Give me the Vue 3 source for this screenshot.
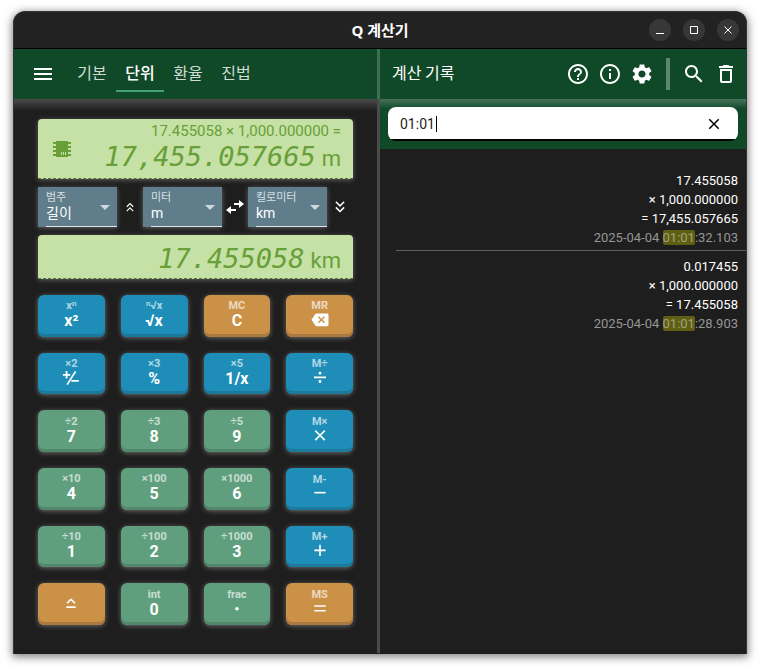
<script setup>
import { ref } from 'vue'

const tabs = ['기본', '단위', '환율', '진법']
const activeTab = ref('단위')
const search = ref('01:01')

const keys = [
  { sub: 'x', sup: 'n', main: 'x²', tone: 'blue' },
  { pre: 'n', sub: '√x', main: '√x', tone: 'blue' },
  { sub: 'MC', main: 'C', tone: 'orange' },
  { sub: 'MR', icon: 'backspace', name: '지우기', tone: 'orange' },
  { sub: '×2', icon: 'sign', name: '부호', tone: 'blue' },
  { sub: '×3', main: '%', tone: 'blue' },
  { sub: '×5', main: '1/x', tone: 'blue' },
  { sub: 'M÷', icon: 'divide', name: '나누기', tone: 'blue' },
  { sub: '÷2', main: '7', tone: 'green' },
  { sub: '÷3', main: '8', tone: 'green' },
  { sub: '÷5', main: '9', tone: 'green' },
  { sub: 'M×', icon: 'times', name: '곱하기', tone: 'blue' },
  { sub: '×10', main: '4', tone: 'green' },
  { sub: '×100', main: '5', tone: 'green' },
  { sub: '×1000', main: '6', tone: 'green' },
  { sub: 'M-', icon: 'minus', name: '빼기', tone: 'blue' },
  { sub: '÷10', main: '1', tone: 'green' },
  { sub: '÷100', main: '2', tone: 'green' },
  { sub: '÷1000', main: '3', tone: 'green' },
  { sub: 'M+', icon: 'plus', name: '더하기', tone: 'blue' },
  { icon: 'shift', name: '시프트', tone: 'orange' },
  { sub: 'int', main: '0', tone: 'green' },
  { sub: 'frac', icon: 'dot', name: '소수점', tone: 'green' },
  { sub: 'MS', icon: 'equal', name: '계산', tone: 'orange' }
]

const keyIcons = {
  backspace: 'M22 2H7c-.7 0-1.2.35-1.6.9L0 11l5.4 8.1c.4.55.9.9 1.6.9h15c1.1 0 2-.9 2-2V4c0-1.1-.9-2-2-2zm-3 12.6L17.6 16 14 12.4 10.4 16 9 14.6l3.6-3.6L9 7.4 10.4 6l3.6 3.6L17.6 6 19 7.400 15.400 11z',
  sign: 'M4.500 1.500h2.500v4h4V8H7v4H4.500V8h-4V5.500h4zM17.500 1.500l2 1L7.500 21l-2-1zM12.500 14H23v2.500H12.500z',
  divide: 'M3 9.800h18v2.400H3zM12 2.500a2.200 2.200 0 1 1 0 4.400 2.200 2.200 0 0 1 0-4.400zM12 15.100a2.200 2.200 0 1 1 0 4.400 2.200 2.200 0 0 1 0-4.400z',
  times: 'M20 4.700L18.300 3 12 9.300 5.700 3 4 4.700l6.300 6.300L4 17.300 5.700 19l6.300-6.300 6.300 6.300 1.700-1.700-6.300-6.300z',
  minus: 'M3.500 8.800h17v2.400h-17z',
  plus: 'M3.500 9.800h7.300V2.500h2.400v7.300h7.300v2.400h-7.300v7.300h-2.400v-7.300H3.500z',
  shift: 'M12 5l7 6.500-1.600 1.600L12 8.200l-5.400 4.900L5 11.500zM5 17h14v2.400H5z',
  dot: 'M12 9a2.700 2.700 0 1 1 0 5.400 2.700 2.700 0 0 1 0-5.400z',
  equal: 'M3.500 6.200h17v2.400h-17zM3.500 13.400h17v2.400h-17z'
}

const history = [
  { value: '17.455058', op: '× 1,000.000000', result: '= 17,455.057665', date: '2025-04-04 ', hit: '01:01', rest: ':32.103' },
  { value: '0.017455', op: '× 1,000.000000', result: '= 17.455058', date: '2025-04-04 ', hit: '01:01', rest: ':28.903' }
]
</script>

<template>
  <div class="window">
    <header class="titlebar">
      <h1>Q 계산기</h1>
      <div class="controls">
        <button type="button" aria-label="최소화">
          <svg viewBox="0 0 10 10" width="10" height="10"><path d="M1 8.500h8" /></svg>
        </button>
        <button type="button" aria-label="최대화">
          <svg viewBox="0 0 10 10" width="10" height="10"><path d="M1.500 1.500h7v7h-7z" /></svg>
        </button>
        <button type="button" aria-label="닫기">
          <svg viewBox="0 0 10 10" width="10" height="10"><path d="M1.500 1.500l7 7M8.500 1.500l-7 7" /></svg>
        </button>
      </div>
    </header>

    <div class="panes">
      <section class="calc">
        <nav class="toolbar">
          <button type="button" class="icon-btn" aria-label="메뉴">
            <svg viewBox="0 0 24 24" width="24" height="24"><path d="M3 6h18v2H3zM3 11h18v2H3zM3 16h18v2H3z" /></svg>
          </button>
          <div class="tabs">
            <button
              v-for="tab in tabs"
              :key="tab"
              type="button"
              class="tab"
              :class="{ active: tab === activeTab }"
              @click="activeTab = tab"
            >{{ tab }}</button>
          </div>
        </nav>

        <div class="calc-body">
          <div class="display main-display">
            <svg class="chip" viewBox="0 0 20 18" width="20" height="18">
              <path d="M4 1h12v16H4z" />
              <path d="M1 2h18v2H1zM1 6h18v2H1zM1 10h18v2H1zM1 14h18v2H1z" />
              <path class="chip-mark" d="M9 12h1v3H9zM11 12h1v3h-1zM13 12h1v3h-1z" />
            </svg>
            <div class="readout">
              <div class="expression">17.455058 × 1,000.000000 =</div>
              <div class="value"><span class="lcd">17,455.057665</span><span class="unit">m</span></div>
            </div>
          </div>

          <div class="units">
            <label class="field">
              <span>범주</span>
              <select><option>길이</option></select>
              <svg class="caret" viewBox="0 0 10 5" width="10" height="5"><path d="M0 0h10L5 5z" /></svg>
            </label>
            <button type="button" class="unit-btn" aria-label="위로">
              <svg viewBox="0 0 24 24" width="14" height="14"><path d="M6.500 11.600l5.500-5.500 5.500 5.500M6.500 19l5.500-5.500 5.500 5.500" /></svg>
            </button>
            <label class="field">
              <span>미터</span>
              <select><option>m</option></select>
              <svg class="caret" viewBox="0 0 10 5" width="10" height="5"><path d="M0 0h10L5 5z" /></svg>
            </label>
            <button type="button" class="unit-btn" aria-label="단위 바꾸기">
              <svg class="swap" viewBox="0 0 18 14" width="18" height="14"><path d="M8 3h5V0l5 4-5 4V5H8zM10 9v2H5v3L0 10l5-4v3z" /></svg>
            </button>
            <label class="field">
              <span>킬로미터</span>
              <select><option>km</option></select>
              <svg class="caret" viewBox="0 0 10 5" width="10" height="5"><path d="M0 0h10L5 5z" /></svg>
            </label>
            <button type="button" class="unit-btn" aria-label="아래로">
              <svg viewBox="0 0 24 24" width="18" height="18"><path d="M6.500 5l5.500 5.500 5.500-5.500M6.500 12.500l5.500 5.500 5.500-5.500" /></svg>
            </button>
          </div>

          <div class="display sub-display">
            <div class="value"><span class="lcd">17.455058</span><span class="unit">km</span></div>
          </div>

          <div class="keypad">
            <button
              v-for="(key, i) in keys"
              :key="i"
              type="button"
              class="key"
              :class="key.tone"
              :aria-label="key.name"
            >
              <span v-if="key.sub" class="sub"><sup v-if="key.pre">{{ key.pre }}</sup>{{ key.sub }}<sup v-if="key.sup">{{ key.sup }}</sup></span>
              <span v-if="key.main" class="main">{{ key.main }}</span>
              <svg v-else :class="{ wide: key.icon === 'backspace' || key.icon === 'sign' }" viewBox="0 0 24 24"><path :d="keyIcons[key.icon]" /></svg>
            </button>
          </div>
        </div>
      </section>

      <div class="splitter"></div>

      <section class="history">
        <div class="toolbar">
          <h2>계산 기록</h2>
          <button type="button" class="icon-btn" aria-label="도움말">
            <svg viewBox="0 0 24 24" width="24" height="24"><path d="M11 18h2v-2h-2v2zm1-16C6.480 2 2 6.480 2 12s4.480 10 10 10 10-4.480 10-10S17.520 2 12 2zm0 18c-4.410 0-8-3.590-8-8s3.590-8 8-8 8 3.590 8 8-3.590 8-8 8zm0-14c-2.210 0-4 1.790-4 4h2c0-1.100.9-2 2-2s2 .9 2 2c0 2-3 1.750-3 5h2c0-2.250 3-2.500 3-5 0-2.210-1.790-4-4-4z" /></svg>
          </button>
          <button type="button" class="icon-btn" aria-label="정보">
            <svg viewBox="0 0 24 24" width="24" height="24"><path d="M11 7h2v2h-2zm0 4h2v6h-2zm1-9C6.480 2 2 6.480 2 12s4.480 10 10 10 10-4.480 10-10S17.520 2 12 2zm0 18c-4.410 0-8-3.590-8-8s3.590-8 8-8 8 3.590 8 8-3.590 8-8 8z" /></svg>
          </button>
          <button type="button" class="icon-btn" aria-label="설정">
            <svg viewBox="0 0 24 24" width="24" height="24"><path d="M19.140 12.940c.04-.3.060-.61.060-.94 0-.32-.02-.64-.07-.94l2.030-1.580c.18-.14.230-.41.120-.61l-1.920-3.320c-.12-.22-.37-.29-.59-.22l-2.390.96c-.5-.38-1.030-.7-1.620-.94L14.400 2.810c-.04-.24-.24-.41-.48-.41h-3.840c-.24 0-.43.17-.47.41L9.250 5.350c-.59.24-1.130.57-1.620.94l-2.390-.96c-.22-.08-.47 0-.59.22L2.740 8.870c-.12.21-.08.470.120.610l2.030 1.580c-.05.3-.09.630-.09.940s.02.640.070.940l-2.030 1.580c-.18.14-.23.410-.12.610l1.920 3.320c.12.220.370.290.590.220l2.390-.96c.5.380 1.030.7 1.620.940l.360 2.540c.05.240.240.410.480.410h3.840c.24 0 .440-.17.470-.41l.360-2.540c.59-.24 1.130-.56 1.620-.94l2.390.960c.22.080.470 0 .590-.22l1.920-3.320c.12-.22.070-.47-.12-.61l-2.010-1.580zM12 15.600c-1.980 0-3.600-1.620-3.600-3.600s1.620-3.600 3.600-3.600 3.600 1.620 3.600 3.600-1.620 3.600-3.600 3.600z" /></svg>
          </button>
          <div class="separator"></div>
          <button type="button" class="icon-btn" aria-label="검색">
            <svg viewBox="0 0 24 24" width="24" height="24"><path d="M15.500 14h-.79l-.28-.27C15.410 12.590 16 11.110 16 9.500 16 5.910 13.090 3 9.500 3S3 5.910 3 9.500 5.910 16 9.500 16c1.610 0 3.090-.59 4.230-1.570l.270.280v.790l5 4.990L20.490 19l-4.990-5zm-6 0C7.010 14 5 11.990 5 9.500S7.010 5 9.500 5 14 7.010 14 9.500 11.990 14 9.500 14z" /></svg>
          </button>
          <button type="button" class="icon-btn" aria-label="삭제">
            <svg viewBox="0 0 24 24" width="24" height="24"><path d="M6 19c0 1.100.9 2 2 2h8c1.100 0 2-.9 2-2V7H6v12zM8 9h8v10H8V9zm7.500-5l-1-1h-5l-1 1H5v2h14V4z" /></svg>
          </button>
        </div>

        <div class="search-area">
          <div class="search-box">
            <input v-model="search" type="text" aria-label="검색어" />
            <i class="cursor"></i>
            <button type="button" aria-label="검색어 지우기" @click="search = ''">
              <svg viewBox="0 0 24 24" width="18" height="18"><path d="M19 6.410L17.590 5 12 10.590 6.410 5 5 6.410 10.590 12 5 17.590 6.410 19 12 13.410 17.590 19 19 17.590 13.410 12z" /></svg>
            </button>
          </div>
        </div>

        <ol class="records">
          <li v-for="item in history" :key="item.rest">
            <div>{{ item.value }}</div>
            <div>{{ item.op }}</div>
            <div>{{ item.result }}</div>
            <div class="time">{{ item.date }}<mark>{{ item.hit }}</mark>{{ item.rest }}</div>
          </li>
        </ol>
      </section>
    </div>
  </div>
</template>

<style>
body {
  background: #fff;
}
</style>

<style scoped>
* {
  box-sizing: border-box;
}

button {
  display: flex;
  align-items: center;
  justify-content: center;
  padding: 0;
  border: 0;
  background: none;
  color: inherit;
  font: inherit;
  cursor: pointer;
}

svg {
  display: block;
  fill: currentColor;
}

.window {
  display: flex;
  flex-direction: column;
  min-height: calc(100vh - 27px);
  margin: 11px 13px 16px;
  overflow: hidden;
  border: 1px solid #353535;
  border-bottom-color: #1e1e1e;
  border-radius: 12px 12px 0 0;
  background: #1e1e1e;
  box-shadow: 0 2px 8px 1px rgba(0, 0, 0, 0.5);
  color: #fff;
  font-family: Roboto, "Noto Sans CJK KR", sans-serif;
}

.titlebar {
  display: grid;
  grid-template-columns: 1fr auto 1fr;
  align-items: center;
  height: 37px;
  padding: 0 7px;
  border-bottom: 1px solid #000;
  background: #222;
}

.titlebar h1 {
  grid-column: 2;
  margin: 0;
  font: bold 15px/36px "Noto Sans", "Noto Sans CJK KR", sans-serif;
}

.controls {
  display: flex;
  justify-content: flex-end;
  gap: 12px;
}

.controls button {
  width: 22px;
  height: 22px;
  border-radius: 50%;
  background: #373737;
}

.controls svg {
  fill: none;
  stroke: #fff;
}

.panes {
  display: flex;
  flex: 1;
}

.calc {
  display: flex;
  flex-direction: column;
  width: calc(50% - 3px);
}

.splitter {
  width: 3px;
  background: linear-gradient(#3f6e53 50px, #4b4b4b 50px);
}

.history {
  flex: 1;
  min-width: 0;
}

.toolbar {
  display: flex;
  align-items: center;
  height: 50px;
  padding: 0 4px 0 12px;
  background: #0f4928;
}

.icon-btn {
  width: 32px;
  height: 32px;
}

.calc .toolbar {
  padding-left: 13px;
}

.tabs {
  display: flex;
  margin-left: 9px;
}

.tab {
  width: 48px;
  height: 36px;
  padding-bottom: 2px;
  border-bottom: 2px solid transparent;
  color: #d0dcd4;
  font: 16px/32px "Noto Sans CJK KR", sans-serif;
}

.tab.active {
  border-color: #43a070;
  color: #fff;
  font-weight: 500;
}

.toolbar h2 {
  flex: 1;
  margin: 0;
  padding-bottom: 4px;
  font: 400 16px/32px "Noto Sans CJK KR", sans-serif;
}

.separator {
  width: 4px;
  height: 32px;
  margin: 0 8px;
  background: #5d866e;
}

.calc-body {
  display: flex;
  flex: 1;
  flex-direction: column;
  gap: 8px;
  padding: 20px 24px 28px;
  background: linear-gradient(rgba(255, 255, 255, 0.2), rgba(255, 255, 255, 0) 12px);
}

.display {
  display: flex;
  align-items: center;
  padding: 0 12px;
  border-bottom: 1px dashed #50793a;
  border-radius: 4px 4px 0 0;
  background: #c5e1a5;
  box-shadow: 0 1px 5px rgba(255, 255, 255, 0.3);
  color: #689f38;
}

.main-display {
  height: 60px;
}

.sub-display {
  justify-content: flex-end;
  height: 44px;
  margin-bottom: 8px;
  padding-top: 6px;
}

.chip {
  margin-left: 2px;
}

.chip-mark {
  fill: #c5e1a5;
}

.readout {
  flex: 1;
  padding-top: 2px;
}

.expression {
  font-size: 15px;
  line-height: 17px;
  text-align: right;
}

.value {
  display: flex;
  align-items: baseline;
  justify-content: flex-end;
  gap: 6px;
  line-height: 34px;
}

.lcd {
  font: italic 27px/34px "DejaVu Sans Mono", monospace;
}

.unit {
  font-size: 22px;
}

.units {
  display: grid;
  grid-template-columns: 1fr 26px 1fr 26px 1fr 26px;
  height: 40px;
}

.field {
  display: flex;
  position: relative;
  flex-direction: column;
  min-width: 0;
  padding: 4px 0 0 8px;
  background: #607d8b;
  box-shadow: 0 1px 5px rgba(255, 255, 255, 0.3);
  font-family: Roboto, "Noto Sans CJK KR", sans-serif;
}

.field span {
  color: #d8e0e3;
  font-size: 11px;
  line-height: 14px;
}

.field select {
  flex: 1;
  width: 100%;
  padding: 0 0 4px;
  border: 0;
  border-bottom: 1px solid #dfe5e8;
  border-radius: 0;
  appearance: none;
  background: none;
  color: #fff;
  font: 14px/17px Roboto, "Noto Sans CJK KR", sans-serif;
}

.caret {
  position: absolute;
  top: 18px;
  right: 7px;
  color: #cfd8dc;
  pointer-events: none;
}

.unit-btn svg {
  fill: none;
  stroke: #fff;
  stroke-width: 2;
}

.unit-btn .swap {
  fill: #fff;
  stroke: none;
}

.keypad {
  display: grid;
  flex: 1;
  grid-template-columns: repeat(4, 1fr);
  grid-auto-rows: minmax(41px, 1fr);
  gap: 16px;
}

.key {
  flex-direction: column;
  padding-bottom: 3px;
  border-radius: 6px;
  font: bold 16px/17px Roboto, sans-serif;
}

.key .sub {
  font-size: 11px;
  line-height: 13px;
  opacity: 0.65;
}

.key sup {
  font-size: 8px;
  line-height: 1;
  vertical-align: 3px;
}

.key svg {
  width: 16px;
  height: 16px;
}

.key svg.wide {
  width: 18px;
  height: 17px;
}

.blue {
  background: #1e8eb8;
  box-shadow: inset 0 -3px #1b7a9c, 0 1px 5px rgba(255, 255, 255, 0.35);
}

.green {
  background: #5f9f7e;
  box-shadow: inset 0 -3px #52876b, 0 1px 5px rgba(255, 255, 255, 0.35);
}

.orange {
  background: #ca9147;
  box-shadow: inset 0 -3px #a9793d, 0 1px 5px rgba(255, 255, 255, 0.35);
}

.search-area {
  padding: 8px 8px 9px;
  background: linear-gradient(rgba(255, 255, 255, 0.24), rgba(255, 255, 255, 0) 10px), #0f4928;
}

.search-box {
  display: flex;
  align-items: center;
  height: 34px;
  margin-bottom: -1px;
  padding: 0 15px 0 12px;
  border-radius: 8px;
  background: linear-gradient(to top, #000 2px, #fff 2px);
  color: #000;
}

.search-box input {
  width: 36px;
  field-sizing: content;
  padding: 0;
  border: 0;
  outline: 0;
  background: none;
  color: #222;
  font: 14px/20px Roboto, "Noto Sans CJK KR", sans-serif;
}

.cursor {
  width: 1px;
  height: 16px;
  background: #000;
}

.search-box button {
  margin-left: auto;
}

.records {
  margin: 0;
  padding: 15px 0 0 16px;
  list-style: none;
  font-size: 13px;
  line-height: 19px;
  text-align: right;
}

.records li {
  padding: 7px 8px 3px 0;
}

.records li + li {
  padding-top: 6px;
  border-top: 1px solid #616161;
}

.time {
  color: #969696;
}

mark {
  border-radius: 2px;
  background: #5f5f14;
  color: #a2a27a;
}
</style>
